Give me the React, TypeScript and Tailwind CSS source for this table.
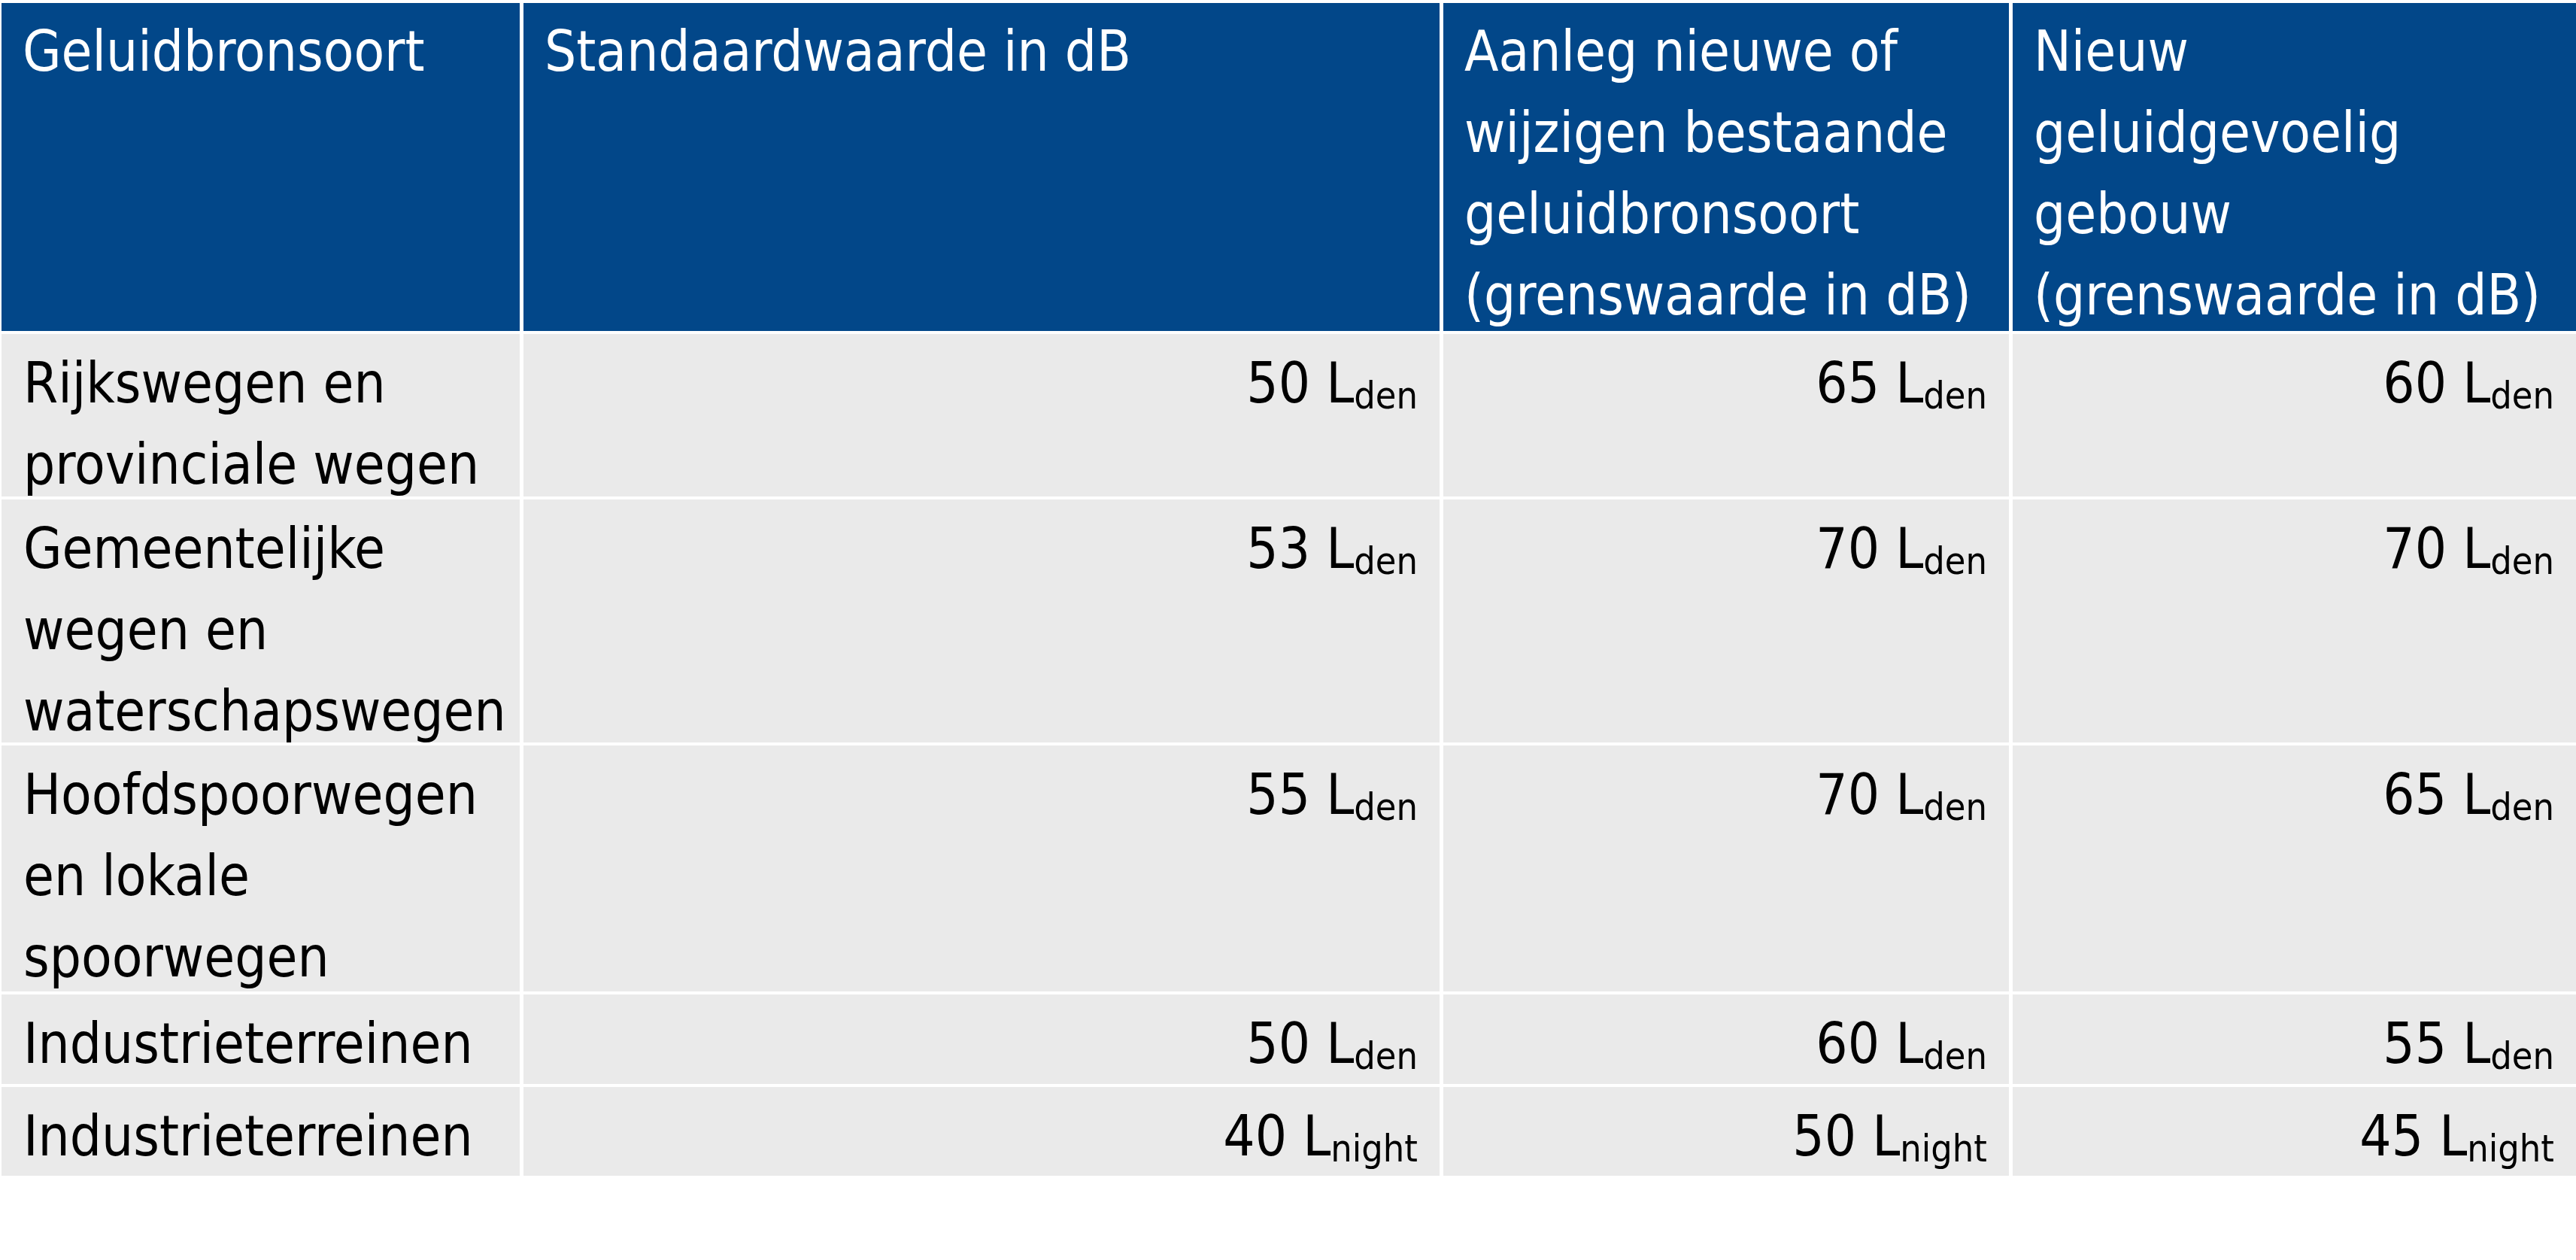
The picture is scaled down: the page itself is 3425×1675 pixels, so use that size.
const font = "font-['DejaVu_Sans_Condensed','DejaVu_Sans',sans-serif] [font-stretch:condensed]";

type Val = { n: number; sub: string };

const rows: { name: string[]; vals: Val[] }[] = [
  {
    name: ["Rijkswegen en", "provinciale wegen"],
    vals: [
      { n: 50, sub: "den" },
      { n: 65, sub: "den" },
      { n: 60, sub: "den" },
    ],
  },
  {
    name: ["Gemeentelijke", "wegen en", "waterschapswegen"],
    vals: [
      { n: 53, sub: "den" },
      { n: 70, sub: "den" },
      { n: 70, sub: "den" },
    ],
  },
  {
    name: ["Hoofdspoorwegen", "en lokale", "spoorwegen"],
    vals: [
      { n: 55, sub: "den" },
      { n: 70, sub: "den" },
      { n: 65, sub: "den" },
    ],
  },
  {
    name: ["Industrieterreinen"],
    vals: [
      { n: 50, sub: "den" },
      { n: 60, sub: "den" },
      { n: 55, sub: "den" },
    ],
  },
  {
    name: ["Industrieterreinen"],
    vals: [
      { n: 40, sub: "night" },
      { n: 50, sub: "night" },
      { n: 45, sub: "night" },
    ],
  },
];

const headers = [
  ["Geluidbronsoort"],
  ["Standaardwaarde in dB"],
  ["Aanleg nieuwe of", "wijzigen bestaande", "geluidbronsoort", "(grenswaarde in dB)"],
  ["Nieuw", "geluidgevoelig", "gebouw", "(grenswaarde in dB)"],
];

function Lines({ lines }: { lines: string[] }) {
  return (
    <>
      {lines.map((l, i) => (
        <div key={i} className="whitespace-nowrap">
          {l}
        </div>
      ))}
    </>
  );
}

function Level({ v }: { v: Val }) {
  return (
    <div className="whitespace-nowrap text-right">
      {v.n} L
      <span className="relative top-[8px] text-[50px] leading-none">{v.sub}</span>
    </div>
  );
}

export default function App() {
  return (
    <div className={`w-[3425px] h-[1675px] bg-white overflow-hidden pt-[4px] pl-[2px] ${font}`}>
      <div className="grid grid-cols-[689px_1218px_752px_1fr] grid-rows-[436px_216px_323px_327px_119px_118px] gap-x-[5px] gap-y-[4px] text-[74px] leading-[108px]">
        {headers.map((h, i) => (
          <div key={i} className="bg-[#024789] text-white pl-[28px] pr-[20px] pt-[10px]">
            <Lines lines={h} />
          </div>
        ))}
        {rows.map((r, ri) => (
          <div key={ri} className="contents">
            <div className="bg-[#eaeaea] text-black pl-[29px] pr-[20px] pt-[11px]">
              <Lines lines={r.name} />
            </div>
            {r.vals.map((v, vi) => (
              <div key={vi} className="bg-[#eaeaea] text-black pl-[20px] pr-[29px] pt-[11px]">
                <Level v={v} />
              </div>
            ))}
          </div>
        ))}
      </div>
    </div>
  );
}
